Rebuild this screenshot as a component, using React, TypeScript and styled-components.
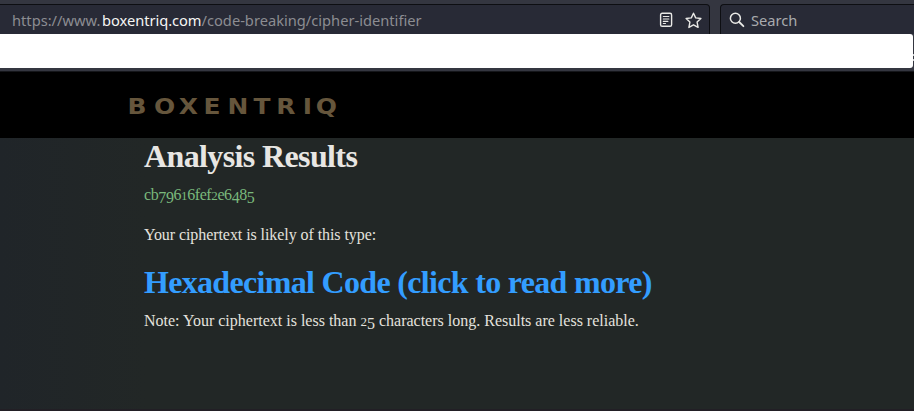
import React from "react";
import styled, { createGlobalStyle } from "styled-components";

const GlobalStyle = createGlobalStyle`
  *, *::before, *::after { box-sizing: border-box; }
  html, body { margin: 0; padding: 0; background: #222726; }
  body { overflow: hidden; }
`;

const Window = styled.div`
  width: 914px;
  height: 411px;
  display: flex;
  flex-direction: column;
  overflow: hidden;
`;

const Toolbar = styled.header`
  height: 34px;
  flex: none;
  display: flex;
  gap: 10px;
  padding-top: 4px;
  background: #343640;
  font: 14.6667px/31px "Noto Sans", sans-serif;
`;

const AddressBar = styled.div`
  width: 710px;
  height: 40px;
  display: flex;
  align-items: flex-start;
  padding-left: 12px;
  border: 1px solid #0d0e12;
  border-left: 0;
  border-radius: 0 4px 4px 0;
  background: #282a36;
  color: #8c8d92;
`;

const Address = styled.span`
  flex: 1;
  white-space: nowrap;
`;

const Domain = styled.span`
  padding-left: 1.7px;
  letter-spacing: -0.05px;
  color: #f6f6f4;
`;

const AddressIcons = styled.div`
  display: flex;
  align-items: center;
  gap: 11px;
  height: 30px;
  padding-right: 7px;
`;

const SearchBar = styled.div`
  flex: 1;
  height: 40px;
  display: flex;
  padding-left: 8px;
  gap: 6px;
  border: 1px solid #0d0e12;
  border-right: 0;
  border-radius: 4px 0 0 4px;
  background: #282a36;
  color: #a9aaae;
`;

const SearchIconBox = styled.span`
  display: flex;
  align-items: center;
  height: 30px;
`;

const BlankStrip = styled.div`
  height: 38px;
  flex: none;
  display: flex;
  padding-bottom: 3px;
  background: #343640;
  border-bottom: 1px solid #15161a;
`;

const BlankPanel = styled.div`
  flex: none;
  width: 913px;
  height: 34px;
  border-radius: 0 3px 3px 0;
  background: #fff;
`;

const EdgeMarks = styled.div`
  width: 1px;
  height: 7px;
  margin-top: 20px;
  border: solid #c9cacc;
  border-width: 2px 0;
`;

const SiteHeader = styled.div`
  height: 66px;
  flex: none;
  padding: 22px 0 0 128px;
  background: #000;
`;

const Results = styled.main`
  flex: 1;
  padding-left: 144px;
  background: linear-gradient(90deg, #202529, #222726 16%);
  border-bottom: 2px solid #221f25;
  color: #e4e2de;
  font-family: "Liberation Serif", serif;
  white-space: nowrap;
`;

const Heading = styled.h2<{ $tracking: number; $link?: boolean }>`
  margin: 0;
  height: 37px;
  font-size: 32px;
  line-height: 37px;
  font-weight: 700;
  color: ${(p) => (p.$link ? "#339dff" : "#e8e6e3")};
  letter-spacing: ${(p) => p.$tracking}px;
`;

const Line = styled.p<{ $top: number; $tracking: number; $cipher?: boolean }>`
  margin: ${(p) => p.$top}px 0 0;
  height: 22px;
  font-size: 16px;
  line-height: 22px;
  letter-spacing: ${(p) => p.$tracking}px;
  color: ${(p) => (p.$cipher ? "#7ab97c" : "#e4e2de")};
`;

const ResultHeading = styled(Heading)`
  margin-top: 18px;
`;

const Digit = styled.span<{ $drop: boolean; $small: boolean }>`
  line-height: 0;
  vertical-align: ${(p) => (p.$drop ? "-3px" : "0")};
  font-size: ${(p) => (p.$small ? "13px" : "inherit")};
`;

function Figures({ value }: { value: string }) {
  return (
    <>
      {value.split("").map((c, i) =>
        /[0-579]/.test(c) ? (
          <Digit key={i} $drop={/[34579]/.test(c)} $small={/[012]/.test(c)}>
            {c}
          </Digit>
        ) : (
          c
        )
      )}
    </>
  );
}

const ReaderIcon = () => (
  <svg width="16" height="16" viewBox="0 0 16 16" fill="none" stroke="#e9e9e6" strokeWidth="1.4" strokeLinecap="round">
    <rect x="2.6" y="1.3" width="11" height="13" rx="1.6" />
    <path d="M5.3 4.5h5.6M5.3 7h5.6M5.3 9.4h4.6M5.3 11.5h2.2" strokeWidth="1.1" />
  </svg>
);

const StarIcon = () => (
  <svg width="17" height="17" viewBox="0 0 17 17" fill="none" stroke="#e9e9e6" strokeWidth="1.4" strokeLinejoin="round">
    <path d="M8.5 1.2l2.2 4.7 5.2.6-3.8 3.6 1 5.3-4.6-2.6-4.6 2.6 1-5.3-3.8-3.6 5.2-.6z" />
  </svg>
);

const SearchIcon = () => (
  <svg width="16" height="16" viewBox="0 0 16 16" fill="none" stroke="#e9e9e6" strokeWidth="1.5" strokeLinecap="round">
    <circle cx="6.4" cy="6.2" r="5" />
    <path d="M10.2 10l4.2 4.2" strokeWidth="1.8" />
  </svg>
);

const Logo = () => (
  <svg width="214" height="28" viewBox="0 0 214 28" display="block" overflow="visible">
    <text
      transform="scale(1.16 1)"
      x="-0.4 22.4 43.8 65.2 85.7 108.3 127.9 150.7 161.8"
      y="19.8"
      fontFamily="DejaVu Sans"
      fontWeight="700"
      fontSize="21.5"
      fill="#66563c"
    >
      BOXENTRIQ
    </text>
  </svg>
);

export default function App() {
  return (
    <Window>
      <GlobalStyle />
      <Toolbar>
        <AddressBar>
          <Address>
            https://www.<Domain>boxentriq.com</Domain>/code-breaking/cipher-identifier
          </Address>
          <AddressIcons>
            <ReaderIcon />
            <StarIcon />
          </AddressIcons>
        </AddressBar>
        <SearchBar>
          <SearchIconBox>
            <SearchIcon />
          </SearchIconBox>
          Search
        </SearchBar>
      </Toolbar>
      <BlankStrip>
        <BlankPanel />
        <EdgeMarks />
      </BlankStrip>
      <SiteHeader>
        <Logo />
      </SiteHeader>
      <Results>
        <Heading $tracking={-0.62}>Analysis Results</Heading>
        <Line $top={9} $tracking={-0.42} $cipher>
          <Figures value="cb79616fef2e6485" />
        </Line>
        <Line $top={18} $tracking={-0.07}>Your ciphertext is likely of this type:</Line>
        <ResultHeading $link $tracking={-0.68}>Hexadecimal Code (click to read more)</ResultHeading>
        <Line $top={9} $tracking={0}>
          Note: Your ciphertext is less than <Figures value="25" /> characters long. Results are less reliable.
        </Line>
      </Results>
    </Window>
  );
}
